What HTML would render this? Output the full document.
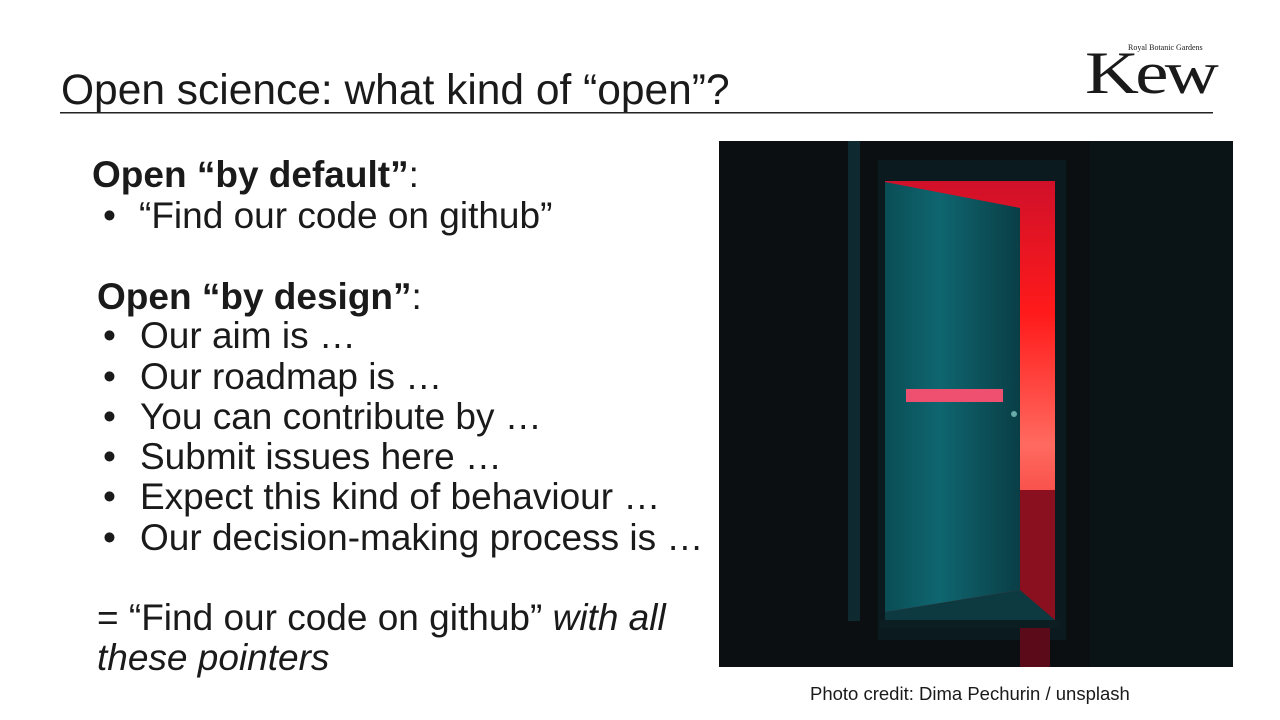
<!DOCTYPE html>
<html><head><meta charset="utf-8"><style>
body{margin:0;background:#fff;width:1280px;height:720px;overflow:hidden}
svg{display:block}
text{font-family:"Liberation Sans",Arial,sans-serif;fill:#1a1a1a}
</style></head><body>
<svg width="1280" height="720" viewBox="0 0 1280 720">
<rect width="1280" height="720" fill="#fff"/>
<text x="61" y="104" font-size="42.5" fill="#111">Open science: what kind of “open”?</text>
<rect x="60" y="112" width="1153" height="1.5" fill="#222"/>
<!-- Kew logo -->
<text x="1085" y="93" font-size="60" fill="#000" style="font-family:'Liberation Serif',serif;letter-spacing:-3px" textLength="130" lengthAdjust="spacingAndGlyphs">Kew</text>
<text x="1128" y="50" font-size="8" style="font-family:'Liberation Serif',serif" fill="#000">Royal Botanic Gardens</text>
<!-- body -->
<text x="92" y="187" font-size="37" font-weight="bold">Open “by default”<tspan font-weight="normal">:</tspan></text>
<text x="103" y="228" font-size="37">•</text><text x="139" y="228" font-size="37">“Find our code on github”</text>
<text x="97" y="309" font-size="37" font-weight="bold">Open “by design”<tspan font-weight="normal">:</tspan></text>
<g font-size="37">
<text x="103" y="348">•</text><text x="140" y="348">Our aim is …</text>
<text x="103" y="389">•</text><text x="140" y="389">Our roadmap is …</text>
<text x="103" y="429">•</text><text x="140" y="429">You can contribute by …</text>
<text x="103" y="469">•</text><text x="140" y="469">Submit issues here …</text>
<text x="103" y="509">•</text><text x="140" y="509">Expect this kind of behaviour …</text>
<text x="103" y="550">•</text><text x="140" y="550">Our decision-making process is …</text>
<text x="97" y="630">= “Find our code on github” <tspan font-style="italic">with all</tspan></text>
<text x="97" y="670" font-style="italic">these pointers</text>
</g>
<text x="810" y="700" font-size="18.5" fill="#000">Photo credit: Dima Pechurin / unsplash</text>
<!-- photo -->
<defs>
<linearGradient id="red" x1="0" y1="0" x2="0" y2="1">
<stop offset="0" stop-color="#d0102a"/><stop offset="0.3" stop-color="#ff1a1a"/><stop offset="0.6" stop-color="#ff6a60"/><stop offset="0.85" stop-color="#f03030"/><stop offset="1" stop-color="#a01020"/>
</linearGradient>
<linearGradient id="door" x1="0" y1="0" x2="1" y2="0">
<stop offset="0" stop-color="#0a4d55"/><stop offset="0.4" stop-color="#0f6670"/><stop offset="1" stop-color="#0a3e46"/>
</linearGradient>
</defs>
<rect x="719" y="141" width="514" height="526" fill="#0b0f12"/>
<rect x="848" y="141" width="12" height="480" fill="#0e2a30"/>
<rect x="878" y="160" width="188" height="480" fill="#0a1a1e"/>
<rect x="1090" y="141" width="143" height="526" fill="#0a1416"/>
<rect x="885" y="181" width="170" height="440" fill="url(#red)"/>
<rect x="1020" y="490" width="35" height="130" fill="#8a1020"/>
<polygon points="885,182 1020,208 1020,590 885,612" fill="url(#door)"/>
<polygon points="885,612 1020,590 1055,620 885,620" fill="#0c3a40"/>
<rect x="906" y="389" width="97" height="13" fill="#f05070"/>
<rect x="880" y="620" width="180" height="8" fill="#0d1e22"/>
<rect x="1020" y="628" width="30" height="39" fill="#5a0a18"/>
<circle cx="1014" cy="414" r="3" fill="#6aa"/>
</svg>
</body></html>
